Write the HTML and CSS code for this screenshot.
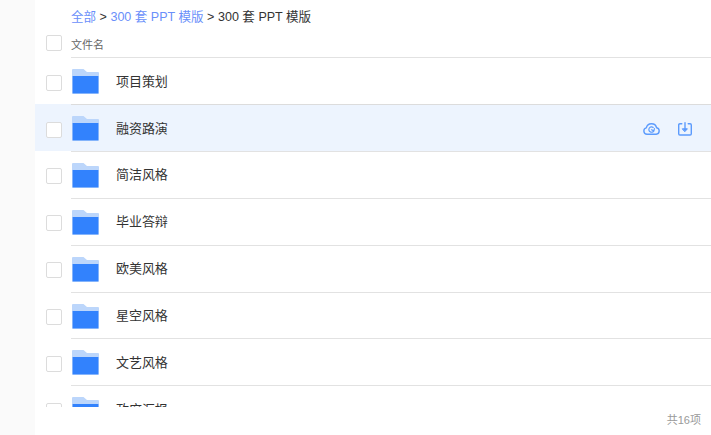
FILE: index.html
```html
<!DOCTYPE html>
<html lang="zh">
<head>
<meta charset="utf-8">
<title>文件列表</title>
<link rel="stylesheet" href="styles.css">
</head>
<body>
<svg class="defs" width="0" height="0" aria-hidden="true">
  <symbol id="folder" viewBox="0 0 27 25">
    <path d="M1 0h10.500l3.500 3h11a1 1 0 0 1 1 1v20a1 1 0 0 1-1 1H1a1 1 0 0 1-1-1V1a1 1 0 0 1 1-1z" fill="#bcd6fb"/>
    <path d="M0.600 7h25.800v17.400H0.600z" fill="#3282fd"/>
  </symbol>
</svg>
<div class="app">
  <aside class="side"></aside>
  <main class="main">
    <nav class="crumbs"><a>全部</a> &gt; <a>300 套 PPT 模版</a> &gt; 300 套 PPT 模版</nav>
    <div class="head"><span class="check"></span><span class="head-label">文件名</span></div>
    <div class="list">
      <div class="row"><span class="check"></span><div class="cell"><svg class="folder"><use href="#folder"/></svg><span class="name">项目策划</span></div></div>
      <div class="row active"><span class="check"></span><div class="cell"><svg class="folder"><use href="#folder"/></svg><span class="name">融资路演</span>
        <div class="actions">
          <svg class="act" viewBox="0 0 17 13" fill="none" stroke="#5c9bfd" stroke-width="1.4"><path d="M4 12.200a3.200 3.200 0 0 1-.7-6.300 5.300 5.300 0 0 1 10.300-.2 3.300 3.300 0 0 1-.4 6.500z" stroke-linejoin="round"/><path d="M10.200 5.400A2.700 2.700 0 1 0 10.900 8.900M8.500 7.800l2.400 1.100.5-2.300" stroke-width="1.200" stroke-linecap="round" stroke-linejoin="round"/></svg>
          <svg class="act dl" viewBox="0 0 14 14" fill="none" stroke="#5c9bfd" stroke-width="1.4" stroke-linecap="round" stroke-linejoin="round"><path d="M3.800 1.700H1.900A1.200 1.200 0 0 0 .7 2.900v8.900A1.200 1.200 0 0 0 1.900 13h10.200a1.200 1.200 0 0 0 1.200-1.200V2.900a1.200 1.200 0 0 0-1.200-1.200h-1.900"/><path d="M7 .7v6.800"/><path d="M4.600 6.800h4.800L7 9.500z" fill="#5c9bfd" stroke-width="1"/></svg>
        </div></div></div>
      <div class="row"><span class="check"></span><div class="cell"><svg class="folder"><use href="#folder"/></svg><span class="name">简洁风格</span></div></div>
      <div class="row"><span class="check"></span><div class="cell"><svg class="folder"><use href="#folder"/></svg><span class="name">毕业答辩</span></div></div>
      <div class="row"><span class="check"></span><div class="cell"><svg class="folder"><use href="#folder"/></svg><span class="name">欧美风格</span></div></div>
      <div class="row"><span class="check"></span><div class="cell"><svg class="folder"><use href="#folder"/></svg><span class="name">星空风格</span></div></div>
      <div class="row"><span class="check"></span><div class="cell"><svg class="folder"><use href="#folder"/></svg><span class="name">文艺风格</span></div></div>
      <div class="row"><span class="check"></span><div class="cell"><svg class="folder"><use href="#folder"/></svg><span class="name">政府汇报</span></div></div>
    </div>
    <footer class="foot">共16项</footer>
  </main>
</div>
</body>
</html>
```
FILE: styles.css
```css
* { box-sizing: border-box; }
html, body { margin: 0; height: 100%; overflow: hidden; }
body { font-family: "Liberation Sans", "Noto Sans CJK SC", sans-serif; color: #333; background: #fff; }
.defs { position: absolute; }
.app { display: flex; height: 435px; }
.side { width: 35px; flex: none; background: #fafafa; }
.main { flex: 1; min-width: 0; display: flex; flex-direction: column; }
.crumbs { height: 35px; padding: 8px 0 0 36px; font-size: 12.55px; line-height: 18px; color: #333; }
.crumbs a { color: #6a8ffa; }
.head { height: 22.3px; display: flex; align-items: flex-start; padding-left: 11px; }
.check { display: block; flex: none; width: 16px; height: 16px; background: #fff; border: 1px solid #dcdcdc; border-radius: 2px; }
.head-label { margin: 1px 0 0 9px; font-size: 11px; line-height: 18px; color: #666; }
.list { height: 350px; overflow: hidden; }
.row { height: 46.86px; display: flex; align-items: center; padding-left: 11px; }
.row > .check { margin-top: 4px; }
.row.active { background: #edf4fe; }
.cell { flex: 1; align-self: stretch; margin-left: 9px; display: flex; align-items: center; border-top: 1px solid #e2e2e2; }
.row.active .cell { border-top-color: #dcdcdc; }
.folder { display: block; flex: none; width: 27px; height: 25px; margin: 1px 0 0 1px; }
.name { margin: 1px 0 0 17px; font-size: 13px; line-height: 18px; letter-spacing: -0.05px; color: #333; }
.actions { margin: 1px 19px 0 auto; display: flex; align-items: center; gap: 18px; }
.act { display: block; width: 17px; height: 13px; }
.act.dl { width: 14px; height: 14px; }
.foot { flex: 1; display: flex; justify-content: flex-end; align-items: center; padding: 0 10px 4px 0; font-size: 11px; color: #999; }
```
